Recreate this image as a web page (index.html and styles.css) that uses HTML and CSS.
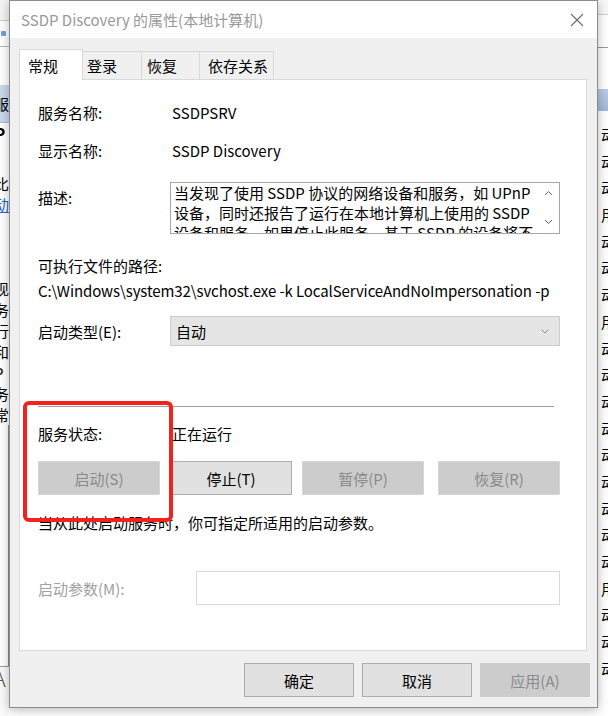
FILE: index.html
```html
<!DOCTYPE html>
<html lang="zh-CN">
<head>
<meta charset="utf-8">
<title>SSDP Discovery 的属性(本地计算机)</title>
<link rel="stylesheet" href="styles.css">
</head>
<body>
<div class="desktop">
  <div class="bgwin">
    <div class="bg-left">
      <div class="bl-top"></div>
      <div class="bl-tool"><span class="bl-dot"></span></div>
      <div class="bl-gap1"></div>
      <div class="bl-head"><span class="clip-l">服</span></div>
      <div class="bl-line bold"><span class="clip-l">P</span></div>
      <div class="bl-gap2"></div>
      <div class="bl-line"><span class="clip-l">比</span></div>
      <div class="bl-line link"><span class="clip-l">动</span></div>
      <div class="bl-gap3"></div>
      <div class="bl-line"><span class="clip-l">现</span></div>
      <div class="bl-line"><span class="clip-l">务</span></div>
      <div class="bl-line"><span class="clip-l">行</span></div>
      <div class="bl-line"><span class="clip-l">和</span></div>
      <div class="bl-line"><span class="clip-l">P</span></div>
      <div class="bl-line"><span class="clip-l">务</span></div>
      <div class="bl-line"><span class="clip-l">常</span></div>
      <div class="bl-fill"></div>
      <div class="bl-bottom"><span class="clip-l thin">A</span></div>
    </div>
    <div class="bg-right">
      <div class="br-top"></div>
      <div class="br-tool"></div>
      <div class="br-gap"></div>
      <div class="br-head"></div>
      <div class="br-rows">
        <div class="br-row">动</div><div class="br-row">动</div><div class="br-row">动</div><div class="br-row">用</div>
        <div class="br-row">动</div><div class="br-row">动</div><div class="br-row">动</div><div class="br-row">用</div>
        <div class="br-row">动</div><div class="br-row">动</div><div class="br-row">动</div><div class="br-row">动</div>
        <div class="br-row">动</div><div class="br-row">动</div><div class="br-row">动</div><div class="br-row">动</div>
        <div class="br-row">动</div><div class="br-row">用</div><div class="br-row">动</div><div class="br-row">动</div>
        <div class="br-row">动</div>
      </div>
    </div>
  </div>

  <div class="dialog">
    <div class="titlebar">
      <span class="title">SSDP Discovery 的属性(本地计算机)</span>
      <svg class="close" width="14" height="14" viewBox="0 0 14 14"><path d="M1 1 L13 13 M13 1 L1 13" stroke="#6b6b6b" stroke-width="1.1" fill="none"/></svg>
    </div>
    <div class="dbody">
      <div class="tabs">
        <div class="tab active t1">常规</div>
        <div class="tab t2">登录</div>
        <div class="tab t3">恢复</div>
        <div class="tab t4">依存关系</div>
      </div>
      <div class="panel">
        <div class="row r1"><span class="lbl">服务名称:</span><span class="val">SSDPSRV</span></div>
        <div class="row r2"><span class="lbl">显示名称:</span><span class="val">SSDP Discovery</span></div>
        <div class="descrow">
          <span class="lbl dlbl">描述:</span>
          <div class="descbox">
            <div class="desctext">
              <div class="dline">当发现了使用 SSDP 协议的网络设备和服务，如 UPnP</div>
              <div class="dline">设备，同时还报告了运行在本地计算机上使用的 SSDP</div>
              <div class="dline">设备和服务。如果停止此服务，基于 SSDP 的设备将不</div>
            </div>
            <div class="dscroll">
              <svg width="9" height="6" viewBox="0 0 9 6"><path d="M1 5 L4.5 1.5 L8 5" stroke="#606060" stroke-width="1" fill="none"/></svg>
              <svg width="9" height="6" viewBox="0 0 9 6"><path d="M1 1 L4.5 4.5 L8 1" stroke="#606060" stroke-width="1" fill="none"/></svg>
            </div>
          </div>
        </div>
        <div class="plain exe">可执行文件的路径:</div>
        <div class="plain path">C:\Windows\system32\svchost.exe -k LocalServiceAndNoImpersonation -p</div>
        <div class="row r-type">
          <span class="lbl">启动类型(E):</span>
          <div class="combo"><span>自动</span>
            <svg width="8" height="5" viewBox="0 0 8 5"><path d="M0.5 0.5 L4 4 L7.5 0.5" stroke="#8a8a8a" stroke-width="1" fill="none"/></svg>
          </div>
        </div>
        <div class="sep"></div>
        <div class="row r-status"><span class="lbl">服务状态:</span><span class="val">正在运行</span></div>
        <div class="btnrow">
          <div class="btn wide disabled">启动(S)</div>
          <div class="btn wide">停止(T)</div>
          <div class="btn wide disabled">暂停(P)</div>
          <div class="btn wide disabled b4">恢复(R)</div>
        </div>
        <div class="plain hint">当从此处启动服务时，你可指定所适用的启动参数。</div>
        <div class="row r-param">
          <span class="lbl plbl">启动参数(M):</span>
          <div class="pinput"></div>
        </div>
      </div>
      <div class="footer">
        <div class="btn fbtn">确定</div>
        <div class="btn fbtn">取消</div>
        <div class="btn fbtn disabled flat">应用(A)</div>
      </div>
    </div>
  </div>

  <div class="annot"></div>
</div>
</body>
</html>
```

FILE: styles.css
```css
* { box-sizing: border-box; }
html, body { margin: 0; padding: 0; }
body {
  width: 608px;
  height: 716px;
  overflow: hidden;
  background: #ffffff;
  font-family: "Noto Sans CJK SC", "Noto Sans", sans-serif;
  font-size: 15px;
  color: #000;
}
.desktop {
  position: relative;
  width: 608px;
  height: 716px;
  overflow: hidden;
}

/* background services window */
.bgwin {
  display: flex;
  justify-content: space-between;
  width: 608px;
  height: 716px;
  background: #ffffff;
}
.bg-left {
  width: 9px;
  height: 716px;
  display: flex;
  flex-direction: column;
  overflow: hidden;
}
.bl-top { height: 21px; background: #f4f4f4; border-bottom: 1px solid #cfcfcf; }
.bl-tool { height: 26px; background: #ffffff; border-bottom: 1px solid #bdbdbd; position: relative; }
.bl-dot { position: absolute; left: 1px; top: 10px; width: 5px; height: 5px; background: #6fa3d8; border-radius: 1px; }
.bl-gap1 { height: 38px; }
.bl-head { height: 38px; background: #c9d8eb; display: flex; align-items: center; font-size: 15px; border-bottom: 1px solid #a9bed8; }
.bl-line { height: 21px; display: flex; align-items: center; font-size: 15px; }
.bl-line.bold { font-weight: bold; font-size: 17px; }
.bl-line.link { color: #1f64c8; text-decoration: underline; }
.bl-gap2 { height: 29px; }
.bl-gap3 { height: 63px; }
.clip-l { display: block; margin-left: -6px; white-space: nowrap; line-height: 1; }
.clip-l.thin { font-family: "DejaVu Sans", sans-serif; font-weight: 200; font-size: 24px; color: #555; margin-left: -10px; }
.bl-fill { flex: 1; border-right: 1px solid #8a8a8a; }
.bl-bottom { height: 50px; border-top: 1px solid #9a9a9a; display: flex; align-items: flex-start; background: #fafafa; }

.bg-right {
  width: 10px;
  height: 716px;
  display: flex;
  flex-direction: column;
  overflow: hidden;
  background: #ffffff;
}
.br-top { height: 15px; border-bottom: 1px solid #cfcfcf; background: #f7f7f7; }
.br-tool { height: 33px; border-bottom: 1px solid #9c9c9c; }
.br-gap { height: 41px; }
.br-head { height: 22px; background: linear-gradient(#b9cde6, #9fb8d8); }
.br-rows { display: flex; flex-direction: column; padding-top: 11px; }
.br-row {
  height: 26.7px;
  line-height: 26.7px;
  font-size: 15px;
  padding-left: 3px;
  white-space: nowrap;
  overflow: hidden;
}

/* dialog window */
.dialog {
  position: absolute;
  left: 9px;
  top: 0;
  width: 589px;
  height: 708px;
  background: #f0f0f0;
  border: 1px solid #8c8c8c;
  box-shadow: 0 2px 10px rgba(0, 0, 0, 0.28);
  display: flex;
  flex-direction: column;
  z-index: 5;
}
.titlebar {
  height: 37px;
  background: #ffffff;
  display: flex;
  align-items: center;
  justify-content: space-between;
  padding: 0 13px 0 11px;
  flex-shrink: 0;
}
.title {
  color: #999999;
  font-size: 15px;
  white-space: nowrap;
}
.close { display: block; }

.dbody {
  padding: 0 10px 0 9px;
  display: flex;
  flex-direction: column;
}
.tabs {
  display: flex;
  align-items: flex-end;
  height: 31px;
  margin-top: 11px;
  position: relative;
  z-index: 2;
}
.tab {
  height: 28px;
  background: #f0f0f0;
  border: 1px solid #d9d9d9;
  border-bottom: none;
  display: flex;
  align-items: center;
  white-space: nowrap;
  font-size: 15px;
  margin-bottom: 1px;
}
.tab + .tab { border-left: none; }
.tab.active {
  height: 31px;
  background: #ffffff;
  margin-bottom: 0;
  border-right: 1px solid #d9d9d9;
}
.t1 { width: 64px; padding-left: 8px; }
.t2 { width: 59px; padding-left: 4px; }
.t3 { width: 58px; padding-left: 5px; }
.t4 { width: 74px; padding-left: 8px; }

.panel {
  height: 572px;
  margin-top: -1px;
  background: #ffffff;
  border: 1px solid #d9d9d9;
  padding: 20px 0 0 18px;
  display: flex;
  flex-direction: column;
  position: relative;
  z-index: 1;
}
.row {
  display: flex;
  align-items: center;
  height: 24px;
  white-space: nowrap;
}
.lbl { width: 132px; flex-shrink: 0; }
.val { padding-left: 2px; }
.r2 { margin-top: 14px; }

.descrow {
  display: flex;
  margin-top: 20px;
  height: 52px;
}
.dlbl { padding-top: 5px; line-height: 21px; }
.descbox {
  width: 390px;
  height: 52px;
  border: 1px solid #a6a6a6;
  display: flex;
  overflow: hidden;
}
.desctext {
  flex: 1;
  padding-left: 3px;
  line-height: 20px;
  overflow: hidden;
}
.dline { white-space: nowrap; }
.dscroll {
  width: 20px;
  display: flex;
  flex-direction: column;
  justify-content: space-between;
  align-items: center;
  padding: 7px 2px 8px 0;
}
.dscroll svg { display: block; }

.plain {
  height: 25px;
  line-height: 25px;
  white-space: nowrap;
}
.exe { margin-top: 19px; }
.path { letter-spacing: -0.1px; }

.r-type { margin-top: 13px; height: 30px; }
.combo {
  width: 390px;
  height: 30px;
  background: #e5e5e5;
  border: 1px solid #cccccc;
  display: flex;
  align-items: center;
  justify-content: space-between;
  padding: 0 10px 0 5px;
}
.combo svg { display: block; }

.sep {
  width: 516px;
  height: 1px;
  background: #a0a0a0;
  margin-top: 60px;
}
.r-status { margin-top: 14px; }

.btnrow {
  display: flex;
  margin-top: 16px;
  gap: 10px;
}
.btn {
  height: 34px;
  background: #e1e1e1;
  border: 1px solid #adadad;
  display: flex;
  align-items: center;
  justify-content: center;
  white-space: nowrap;
  font-size: 15px;
}
.btn.wide { width: 122px; }
.btn.b4 { margin-left: 4px; }
.btn.disabled {
  background: #cccccc;
  border-color: #d6d6d6;
  color: #8a8a8a;
}
.btn.flat { border-color: #cccccc; }

.hint { margin-top: 16px; height: 24px; line-height: 24px; }

.r-param { margin-top: 36px; height: 34px; }
.plbl { width: 158px; color: #a0a0a0; }
.pinput {
  width: 364px;
  height: 34px;
  border: 1px solid #d9d9d9;
  background: #ffffff;
}

.footer {
  display: flex;
  justify-content: flex-end;
  gap: 8px;
  margin-top: 12px;
  margin-right: -3px;
}
.fbtn { width: 110px; }

/* red annotation box */
.annot {
  position: absolute;
  left: 23px;
  top: 401px;
  width: 150px;
  height: 121px;
  border: 4px solid #f2231f;
  border-radius: 6px;
  z-index: 20;
}
```
